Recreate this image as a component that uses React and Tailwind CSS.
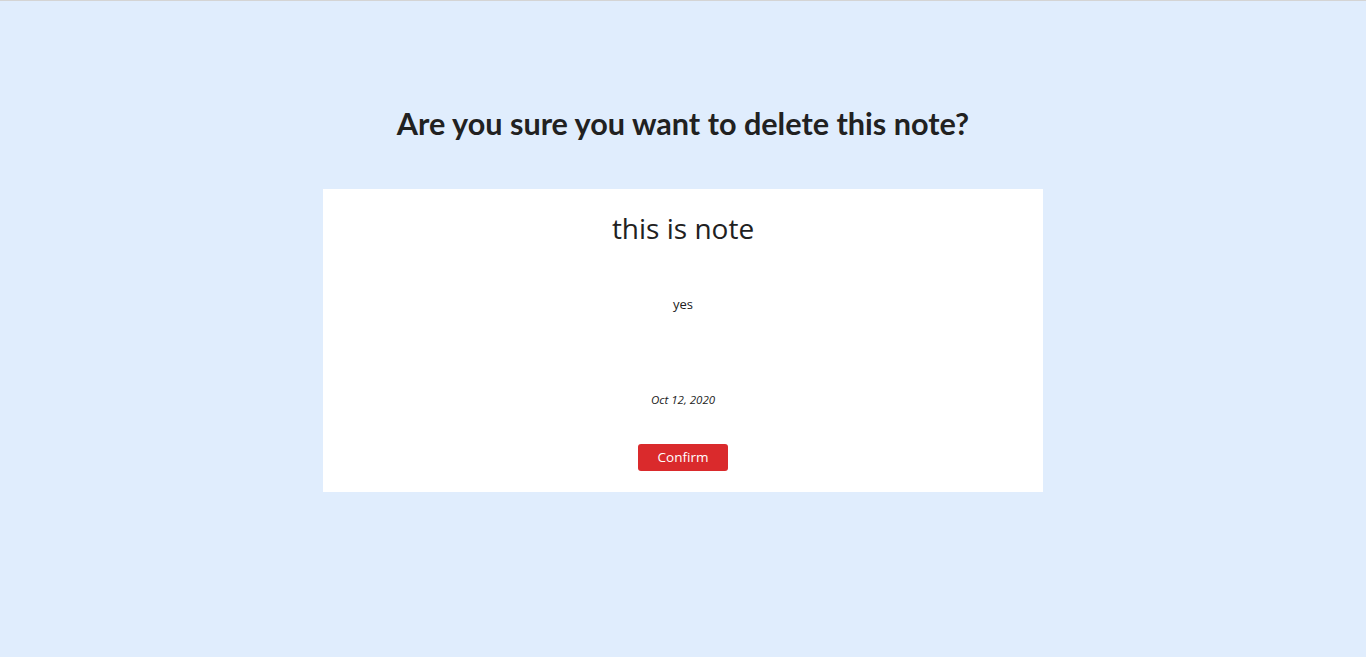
import React from "react";

function DeleteNote() {
  const note = { title: "this is note", content: "yes", date: "Oct 12, 2020" };

  return (
    <div
      className="min-h-screen bg-[#e0edfd] border-t border-[#d4d4d4] text-[#212121]"
      style={{ fontFamily: "'Open Sans', 'Noto Sans', sans-serif" }}
    >
      <h1
        className="pt-[103px] text-center text-[30.6px] leading-[40px] font-bold"
        style={{ fontFamily: "Lato, 'Open Sans', sans-serif" }}
      >
        Are you sure you want to delete this note?
      </h1>
      <div className="mx-auto mt-[45px] w-[720px] bg-white pt-[19px] pb-[21px] flex flex-col items-center">
        <h2 className="text-[28px] leading-[40px]">{note.title}</h2>
        <p className="mt-[46px] text-[13px] leading-[20px]">{note.content}</p>
        <p className="mt-[78px] text-[11.5px] leading-[16px] italic">{note.date}</p>
        <button className="mt-[36px] h-[27px] w-[90px] rounded-[3px] bg-[#da2a2c] text-[13.5px] text-white">
          Confirm
        </button>
      </div>
    </div>
  );
}

export default function App() {
  return <DeleteNote />;
}
